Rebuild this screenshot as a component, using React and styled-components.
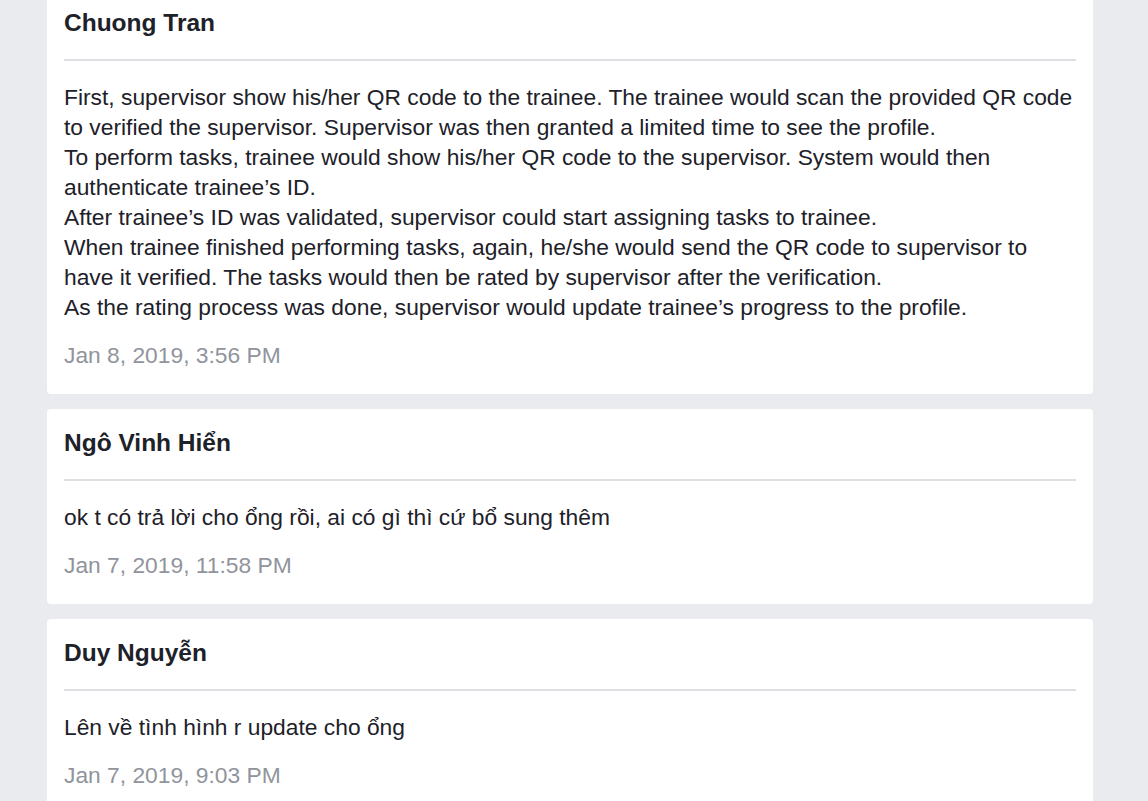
import styled, { createGlobalStyle } from 'styled-components'

const GlobalStyle = createGlobalStyle`
  html, body {
    margin: 0;
    padding: 0;
    background: #e9ebee;
  }
  body {
    font-family: "Liberation Sans", Arial, Helvetica, sans-serif;
    color: #1d2129;
    overflow: hidden;
  }
`

const Page = styled.div`
  min-height: 801px;
  background: #e9ebee;
  padding-left: 47px;
`

const Feed = styled.div`
  width: 1046px;
  margin-top: -11.5px;
  display: flex;
  flex-direction: column;
  gap: 15px;
`

const Card = styled.div`
  background: #fff;
  border-radius: 4px;
  padding: 0 17px 23.5px;
`

const Header = styled.div`
  padding: 20px 0 22px;
  border-bottom: 2px solid #dddfe2;
`

const Name = styled.h3`
  margin: 0;
  font-size: 24.5px;
  line-height: 28px;
  font-weight: 700;
  color: #1d2129;
`

const Body = styled.div`
  margin-top: 21px;
  font-size: 22.8px;
  line-height: 30px;
`

const Line = styled.div``

const Time = styled.div`
  margin-top: 19px;
  font-size: 22.8px;
  line-height: 29.7px;
  color: #90949c;
`

const comments = [
  {
    name: 'Chuong Tran',
    lines: [
      'First, supervisor show his/her QR code to the trainee. The trainee would scan the provided QR code to verified the supervisor. Supervisor was then granted a limited time to see the profile.',
      'To perform tasks, trainee would show his/her QR code to the supervisor. System would then authenticate trainee\u2019s ID.',
      'After trainee\u2019s ID was validated, supervisor could start assigning tasks to trainee.',
      'When trainee finished performing tasks, again, he/she would send the QR code to supervisor to have it verified. The tasks would then be rated by supervisor after the verification.',
      'As the rating process was done, supervisor would update trainee\u2019s progress to the profile.',
    ],
    time: 'Jan 8, 2019, 3:56 PM',
  },
  {
    name: 'Ngô Vinh Hiển',
    lines: ['ok t có trả lời cho ổng rồi, ai có gì thì cứ bổ sung thêm'],
    time: 'Jan 7, 2019, 11:58 PM',
  },
  {
    name: 'Duy Nguyễn',
    lines: ['Lên về tình hình r update cho ổng'],
    time: 'Jan 7, 2019, 9:03 PM',
  },
]

function Comment({ c }) {
  return (
    <Card>
      <Header>
        <Name>{c.name}</Name>
      </Header>
      <Body>
        {c.lines.map((l, i) => (
          <Line key={i}>{l}</Line>
        ))}
      </Body>
      <Time>{c.time}</Time>
    </Card>
  )
}

export default function App() {
  return (
    <Page>
      <GlobalStyle />
      <Feed>
        {comments.map((c) => (
          <Comment key={c.name} c={c} />
        ))}
      </Feed>
    </Page>
  )
}
